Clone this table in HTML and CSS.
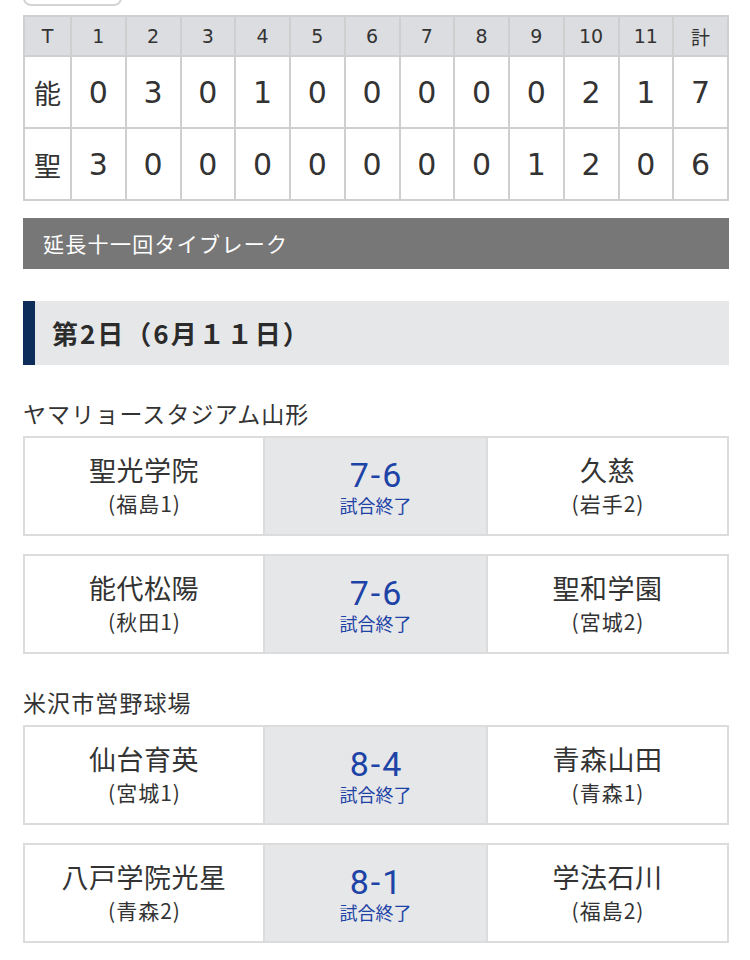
FILE: index.html
```html
<!DOCTYPE html>
<html lang="ja">
<head>
<meta charset="utf-8">
<link rel="stylesheet" href="styles.css">
</head>
<body>
<div class="page">
  <div class="tab-stub"></div>

  <table class="score">
    <thead>
      <tr><th>T</th><th>1</th><th>2</th><th>3</th><th>4</th><th>5</th><th>6</th><th>7</th><th>8</th><th>9</th><th>10</th><th>11</th><th>計</th></tr>
    </thead>
    <tbody>
      <tr><td class="team">能</td><td>0</td><td>3</td><td>0</td><td>1</td><td>0</td><td>0</td><td>0</td><td>0</td><td>0</td><td>2</td><td>1</td><td>7</td></tr>
      <tr><td class="team">聖</td><td>3</td><td>0</td><td>0</td><td>0</td><td>0</td><td>0</td><td>0</td><td>0</td><td>1</td><td>2</td><td>0</td><td>6</td></tr>
    </tbody>
  </table>

  <div class="note">延長十一回タイブレーク</div>

  <h2 class="day">第2日（6月１１日）</h2>

  <div class="venue">ヤマリョースタジアム山形</div>
  <div class="match">
    <div class="side"><div class="name">聖光学院</div><div class="pref">(福島1)</div></div>
    <div class="result"><div class="num">7-6</div><div class="status">試合終了</div></div>
    <div class="side"><div class="name">久慈</div><div class="pref">(岩手2)</div></div>
  </div>
  <div class="match">
    <div class="side"><div class="name">能代松陽</div><div class="pref">(秋田1)</div></div>
    <div class="result"><div class="num">7-6</div><div class="status">試合終了</div></div>
    <div class="side"><div class="name">聖和学園</div><div class="pref">(宮城2)</div></div>
  </div>

  <div class="venue">米沢市営野球場</div>
  <div class="match">
    <div class="side"><div class="name">仙台育英</div><div class="pref">(宮城1)</div></div>
    <div class="result"><div class="num">8-4</div><div class="status">試合終了</div></div>
    <div class="side"><div class="name">青森山田</div><div class="pref">(青森1)</div></div>
  </div>
  <div class="match">
    <div class="side"><div class="name">八戸学院光星</div><div class="pref">(青森2)</div></div>
    <div class="result"><div class="num">8-1</div><div class="status">試合終了</div></div>
    <div class="side"><div class="name">学法石川</div><div class="pref">(福島2)</div></div>
  </div>
</div>
</body>
</html>
```

FILE: styles.css
```css
html, body {
  margin: 0;
  padding: 0;
  background: #fff;
}
body {
  font-family: "Noto Sans CJK JP", "Noto Sans", sans-serif;
  color: #333;
  overflow: hidden;
}
.page {
  width: 706px;
  margin-left: 23px;
}
.tab-stub {
  width: 99px;
  height: 36px;
  margin-top: -30px;
  margin-left: 0;
  border: 2px solid #d4d4d4;
  border-radius: 8px;
  box-sizing: border-box;
}
.score {
  margin-top: 9px;
  width: 706px;
  border-collapse: collapse;
  table-layout: fixed;
  font-family: "DejaVu Sans", "Noto Sans CJK JP", sans-serif;
  color: #333;
}
.score th, .score td {
  border: 2px solid #cfcfcf;
  text-align: center;
  padding: 0;
  font-weight: normal;
}
.score th {
  background: #dcdde0;
  height: 38px;
  font-size: 19px;
}
.score th:first-child { width: 45px; }
.score td {
  height: 70px;
  font-size: 30px;
}
.score th:last-child,
.score td.team {
  font-family: "Noto Sans CJK JP", sans-serif;
}
.score td.team { font-size: 27px; }
.note {
  margin-top: 17px;
  height: 51px;
  background: #777;
  color: #fff;
  font-size: 21px;
  letter-spacing: 1.3px;
  line-height: 51px;
  padding-left: 20px;
}
.day {
  margin: 32px 0 0;
  height: 64px;
  box-sizing: border-box;
  background: #e6e7e9;
  border-left: 12px solid #0e2c59;
  padding-left: 17px;
  font-size: 26px;
  letter-spacing: 2px;
  font-weight: bold;
  line-height: 64px;
  color: #2b2b2b;
}
.venue {
  margin-top: 30px;
  margin-bottom: 4px;
  font-size: 23px;
  letter-spacing: 1.1px;
  line-height: 37px;
  color: #333;
}
.match {
  display: grid;
  grid-template-columns: 238px 225px 1fr;
  height: 100px;
  box-sizing: border-box;
  border: 2px solid #dcdcdc;
  margin-bottom: 18px;
}
.side, .result {
  display: flex;
  flex-direction: column;
  justify-content: center;
  align-items: center;
}
.result {
  background: #e6e7e9;
  border-left: 2px solid #dcdcdc;
  border-right: 2px solid #dcdcdc;
  color: #1d43a6;
}
.name {
  font-size: 27px;
  letter-spacing: 0.5px;
  line-height: 34px;
}
.pref {
  font-size: 21px;
  letter-spacing: 1px;
  padding-left: 1px;
  line-height: 32px;
}
.num {
  font-family: Roboto, "Noto Sans", sans-serif;
  font-size: 34px;
  letter-spacing: 2px;
  padding-left: 2px;
  line-height: 36px;
  margin-top: 2px;
}
.status {
  font-size: 18px;
  line-height: 24px;
}
```
